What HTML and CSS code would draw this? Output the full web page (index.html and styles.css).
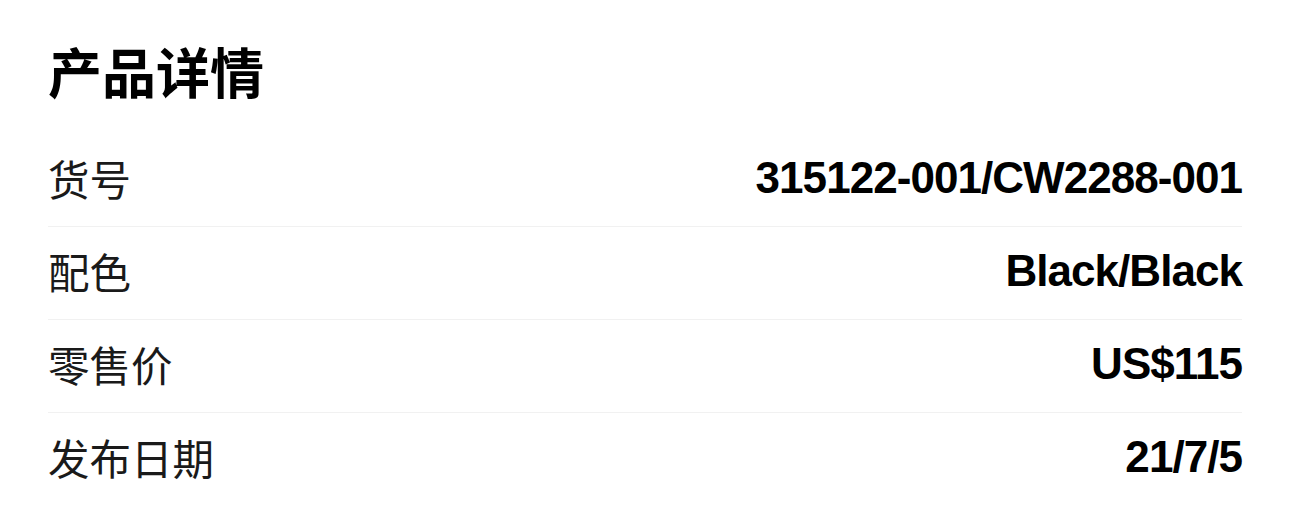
FILE: index.html
```html
<!DOCTYPE html>
<html lang="zh-CN">
<head>
<meta charset="utf-8">
<title>产品详情</title>
<link rel="stylesheet" href="styles.css">
</head>
<body>
<section class="details">
  <h1 class="details-title">产品详情</h1>
  <div class="detail-row">
    <span class="detail-label">货号</span>
    <span class="detail-value">315122-001/CW2288-001</span>
  </div>
  <div class="detail-row">
    <span class="detail-label">配色</span>
    <span class="detail-value">Black/Black</span>
  </div>
  <div class="detail-row">
    <span class="detail-label">零售价</span>
    <span class="detail-value">US$115</span>
  </div>
  <div class="detail-row">
    <span class="detail-label">发布日期</span>
    <span class="detail-value">21/7/5</span>
  </div>
</section>
</body>
</html>
```

FILE: styles.css
```css
html, body {
  margin: 0;
  padding: 0;
  background: #ffffff;
}

.details {
  padding: 44px 48px 0 48px;
  font-family: "Noto Sans CJK SC", "Noto Sans", sans-serif;
  color: #111111;
}

.details-title {
  margin: 0 0 36px 0;
  font-size: 54px;
  line-height: 54px;
  font-weight: 700;
  color: #000000;
}

.detail-row {
  display: flex;
  justify-content: space-between;
  align-items: center;
  box-sizing: border-box;
  height: 93px;
  padding-bottom: 5px;
  border-bottom: 1px solid #f1f1f1;
}

.detail-row:last-child {
  border-bottom: none;
}

.detail-label {
  font-size: 41.5px;
  line-height: 42px;
  font-weight: 400;
  color: #1a1a1a;
}

.detail-value {
  font-family: "Liberation Sans", Arial, sans-serif;
  font-size: 44px;
  line-height: 44px;
  font-weight: 700;
  letter-spacing: -0.95px;
  color: #000000;
}
```
